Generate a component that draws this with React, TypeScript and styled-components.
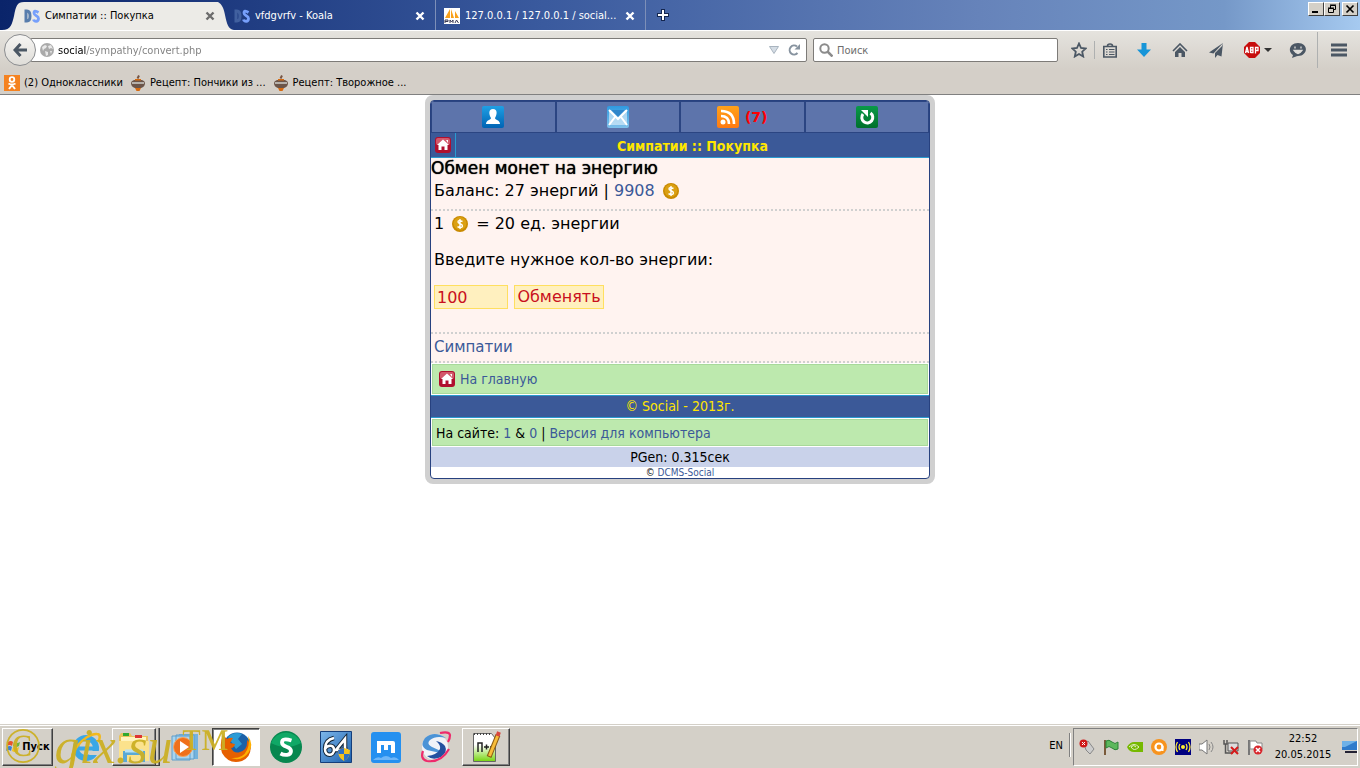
import React from "react";
import styled, { createGlobalStyle, css } from "styled-components";

const Global = createGlobalStyle`
  *, *::before, *::after { box-sizing: border-box; }
  body { margin: 0; background: #fff; color: #000; font: 11px/14px "DejaVu Sans Condensed", "DejaVu Sans", sans-serif; }
  button, input { font: inherit; color: inherit; margin: 0; }
  button { padding: 0; border: 0; background: none; }
  svg { display: block; flex: none; }
  a { color: #3b5998; text-decoration: none; }
`;

const Screen = styled.div`
  display: flex;
  flex-direction: column;
  min-height: 100vh;
`;

/* ---------- browser chrome ---------- */

const TabStrip = styled.header`
  display: flex;
  align-items: flex-end;
  height: 31px;
  border-bottom: 1px solid #fff;
  background: linear-gradient(90deg, #0a246a, #3a5a9e 40%, #6683ba 72%, #7598c8 90%, #a6caf0);
`;

const Tab = styled.div<{ $active?: boolean }>`
  display: flex;
  align-items: center;
  gap: 4px;
  width: ${(p) => (p.$active ? 194 : 202)}px;
  height: ${(p) => (p.$active ? 28 : 30)}px;
  margin-right: ${(p) => (p.$active ? 0 : 8)}px;
  padding: ${(p) => (p.$active ? "0" : "2px 7px 0 0")};
  color: ${(p) => (p.$active ? "#000" : "#fff")};
  background: ${(p) => (p.$active ? "#ecebe7" : "none")};
  border-right: ${(p) => (p.$active ? "0" : "1px solid #7d8fb8")};
`;

const TabLabel = styled.button`
  display: flex;
  align-items: center;
  gap: 5px;
  flex: 1;
  min-width: 0;
  text-align: left;
  white-space: nowrap;
`;

const IconButton = styled.button<{ $w?: number }>`
  display: flex;
  align-items: center;
  justify-content: center;
  width: ${(p) => p.$w ?? 16}px;
  height: 24px;
  flex: none;
`;

const NewTab = styled(IconButton)`
  align-self: center;
  margin-left: 1px;
`;

const WindowButtons = styled.div`
  display: flex;
  align-self: flex-start;
  margin: 2px 2px 0 auto;
`;

const WindowButton = styled.button<{ $apart?: boolean }>`
  display: flex;
  align-items: center;
  justify-content: center;
  width: 16px;
  height: 14px;
  margin-left: ${(p) => (p.$apart ? 2 : 0)}px;
  background: #d4d0c8;
  border: 1px solid;
  border-color: #fff #404040 #404040 #fff;
`;

const Toolbars = styled.div`
  height: 64px;
  border-bottom: 1px solid #808080;
  background: linear-gradient(#e5e3de, #d4cfc8 60%);
`;

const NavBar = styled.div`
  display: flex;
  align-items: center;
  height: 38px;
  padding: 0 12px 0 4px;
`;

const Back = styled.button`
  display: flex;
  align-items: center;
  justify-content: center;
  width: 32px;
  height: 32px;
  flex: none;
  border: 1px solid #8b8d90;
  border-radius: 50%;
  background: linear-gradient(#f6f5f3, #dfddd8);
  z-index: 1;
`;

const Field = styled.div<{ $width?: number }>`
  display: flex;
  align-items: center;
  gap: 4px;
  height: 24px;
  ${(p) => (p.$width ? css`width: ${p.$width}px; flex: none; margin: 0 12px 0 6px; padding: 0 5px;` : css`flex: 1; margin-left: -6px; padding: 0 4px 0 9px;`)}
  border: 1px solid #7d7b78;
  border-radius: 2px;
  background: #fff;
`;

const TextBox = styled.input`
  flex: 1;
  min-width: 0;
  padding: 1px 0 0;
  border: 0;
  outline: 0;
  background: none;
  color: #6d6d6d;
  &::placeholder { color: #6d6d6d; opacity: 1; }
`;

const Address = styled(TextBox)`
  color: transparent;
  background: linear-gradient(90deg, #000 28px, #7d7d7d 28px);
  background-clip: text;
  -webkit-background-clip: text;
`;

const Tools = styled.div`
  display: flex;
  align-items: center;
`;

const ToolDivider = styled.i<{ $tall?: boolean }>`
  width: 1px;
  height: ${(p) => (p.$tall ? 36 : 18)}px;
  margin: ${(p) => (p.$tall ? "0 12px 0 2px" : "0 0 0 6px")};
  background: #aeb0b0;
`;

const Bookmarks = styled.nav`
  display: flex;
  align-items: center;
  gap: 7px;
  height: 25px;
  padding: 2px 0 0 4px;
`;

const Bookmark = styled.a`
  display: flex;
  align-items: center;
  gap: 4px;
  color: #000;
  white-space: nowrap;
`;

/* ---------- site ---------- */

const Viewport = styled.main`
  flex: 1;
  font-family: "DejaVu Sans", sans-serif;
`;

const Card = styled.div`
  width: 100%;
  max-width: 510px;
  margin: 0 auto;
  border: 5px solid #d0d0d0;
  border-radius: 8px;
  background: #d0d0d0;
`;

const CardBody = styled.div`
  overflow: hidden;
  border: 1px solid #27417f;
  border-radius: 4px;
  background: #fff;
`;

const Menu = styled.nav`
  display: grid;
  grid-template-columns: repeat(4, 1fr);
  gap: 2px;
  padding: 1px;
  background: #2b4582;
`;

const MenuItem = styled.a`
  display: flex;
  align-items: center;
  justify-content: center;
  gap: 6px;
  height: 30px;
  background: #5d74ab;
  color: #f00;
  font-size: 14px;
  font-weight: 700;
`;

const TitleBar = styled.div`
  display: flex;
  height: 25px;
  border-bottom: 1px solid #2a9bd0;
  background: #3b5998;
`;

const HomeLink = styled.a`
  display: flex;
  align-items: center;
  width: 25px;
  padding-left: 4px;
  border-right: 1px solid #2a9bd0;
`;

const Title = styled.h1`
  flex: 1;
  margin: 0;
  color: #ffe600;
  font: 700 14px/26px "DejaVu Sans Condensed", "DejaVu Sans", sans-serif;
  text-align: center;
`;

const Content = styled.section`
  background: #fff3f0;
  font-size: 16px;
  line-height: 20px;
`;

const Subtitle = styled.h2`
  margin: 0;
  font-size: 17px;
  font-weight: 400;
  line-height: 20px;
  text-shadow: 0 0 1px #000;
`;

const Block = styled.div<{ $pad: string; $small?: boolean }>`
  padding: ${(p) => p.$pad};
  border-bottom: 2px dotted #d0d0d0;
  font-size: ${(p) => (p.$small ? 15 : 16)}px;
`;

const Line = styled.p`
  display: flex;
  align-items: center;
  gap: 8px;
  margin: 0;
  white-space: pre;
`;

const Exchange = styled.form`
  display: grid;
  grid-template-columns: 74px 90px;
  gap: 15px 6px;
  padding-top: 16px;
`;

const Prompt = styled.label`
  grid-column: 1 / -1;
  white-space: nowrap;
`;

const controlStyle = css`
  height: 24px;
  border: 1px solid #ffdf60;
  border-radius: 0;
  background: #fff0bf;
  color: #c91020;
  outline: 0;
`;

const Amount = styled.input`
  ${controlStyle}
  width: 100%;
  padding: 0 2px;
`;

const Submit = styled.button`
  ${controlStyle}
  white-space: nowrap;
`;

const GreenRow = styled.div<{ $large?: boolean }>`
  display: flex;
  align-items: center;
  gap: 5px;
  height: ${(p) => (p.$large ? 30 : 27)}px;
  margin: 1px;
  padding: 0 ${(p) => (p.$large ? 6 : 3)}px;
  border: 1px solid #a8d99a;
  background: #bde9ae;
  font: 14px/20px "DejaVu Sans Condensed", "DejaVu Sans", sans-serif;
`;

const Copyright = styled.div`
  border: solid #2a9bd0;
  border-width: 1px 0;
  background: #3b5998;
  color: #ffe600;
  font: 14px/21px "DejaVu Sans Condensed", "DejaVu Sans", sans-serif;
  text-align: center;
`;

const Timing = styled.div`
  background: #c9d2ea;
  font: 14px/20px "DejaVu Sans Condensed", "DejaVu Sans", sans-serif;
  text-align: center;
`;

const Engine = styled.div`
  font: 10px/11px "DejaVu Sans Condensed", "DejaVu Sans", sans-serif;
  text-align: center;
`;

/* ---------- taskbar ---------- */

const Taskbar = styled.footer`
  position: relative;
  display: flex;
  align-items: flex-start;
  gap: 2px;
  height: 44px;
  padding: 2px 2px 0;
  border-top: 1px solid #d4d0c8;
  box-shadow: inset 0 1px #fff;
  background: #d4d0c8;
  overflow: hidden;
`;

const raised = css`
  border: 1px solid;
  border-color: #fff #404040 #404040 #fff;
  box-shadow: inset -1px -1px #808080;
`;

const Start = styled.button`
  ${raised}
  display: flex;
  align-items: center;
  justify-content: center;
  gap: 1px;
  width: 51px;
  height: 38px;
  margin: 1px 7px 0 0;
  font-weight: 700;
`;

const Task = styled.button<{ $look?: "raised" | "pressed" }>`
  display: flex;
  align-items: center;
  justify-content: center;
  width: 48px;
  height: 38px;
  margin-top: 1px;
  ${(p) => p.$look === "raised" && raised}
  ${(p) =>
    p.$look === "pressed" &&
    css`
      background: #fff;
      border: 1px solid;
      border-color: #404040 #fff #fff #404040;
      box-shadow: inset 1px 1px #808080;
    `}
`;

const Stack = styled.div`
  display: flex;
  width: 48px;
  & > button { width: 44px; }
  &::after {
    content: "";
    width: 4px;
    height: 38px;
    margin-top: 1px;
    border: solid #404040;
    border-width: 0 1px 1px 0;
    box-shadow: inset -1px 0 #808080;
  }
`;

const Language = styled.button`
  align-self: center;
  margin-left: auto;
  padding: 0 4px 4px;
`;

const TrayDivider = styled.i`
  width: 2px;
  height: 24px;
  margin: 6px 0 0;
  border-left: 1px solid #808080;
  border-right: 1px solid #fff;
`;

const Tray = styled.div`
  display: flex;
  align-items: center;
  gap: 8px;
  height: 38px;
  margin-top: 1px;
  padding: 0 0 0 5px;
  border: 1px solid;
  border-color: #808080 #fff #fff #808080;
`;

const Clock = styled.time`
  display: flex;
  flex-direction: column;
  width: 60px;
  margin-left: 2px;
  line-height: 16px;
  text-align: center;
`;

const Watermark = styled.div`
  position: absolute;
  left: 4px;
  top: -5px;
  color: #ccb024;
  opacity: 0.95;
  font: 50px/52px "Liberation Serif", serif;
  white-space: pre;
  pointer-events: none;
  em { padding-right: 8px; }
`;

/* ---------- drawings ---------- */

const DS = ({ dim }: { dim?: boolean }) => (
  <svg width="16" height="16" viewBox="0 0 16 16">
    <path d="M2 3v10h1q3 0 3-5t-3-5z" fill="none" stroke={dim ? "#41609f" : "#587dac"} strokeWidth="3" />
    <path d="M14.500 4.500Q10 1.500 10 5c0 3 4.500 2.500 4.500 5.500 0 4-4.500 3-5 1" fill="none" stroke="#77a0fb" strokeWidth="2.800" />
  </svg>
);

const Cross = ({ c }: { c: string }) => (
  <svg width="10" height="10" viewBox="0 0 10 10">
    <path d="M1.500 1.500l7 7m0-7l-7 7" stroke={c} strokeWidth="2.400" />
  </svg>
);

const Sails = () => (
  <svg width="16" height="16" viewBox="0 0 16 16">
    <path fill="#fff" d="M0 0h16v16H0z" />
    <path fill="#f9a11b" d="M6 1v9H1zM7 1l3 9H7zM11 3l4 7h-4z" />
    <path d="M1 15v-3h3v1.500H1M6 15v-3l1.500 2L9 12v3M11 15l1.500-3 2 3" fill="none" stroke="#3a3a55" />
  </svg>
);

const Globe = () => (
  <svg width="14" height="14" viewBox="0 0 14 14">
    <circle cx="7" cy="7" r="7" fill="#aaa" />
    <path fill="#e9e9e9" d="M2 4l3-2 2 1-1 2-2 1-1 2zM8 3l3-1 2 4-2-1-2 1zM5 8l3 1 0 3-2 1zM10 8l2 0-1 3z" />
  </svg>
);

const Pot = () => (
  <svg width="16" height="16" viewBox="0 0 16 16">
    <path d="M7.500 3.500L9 .500" stroke="#754" strokeWidth="2" />
    <path fill="#d56a10" d="M4 11h8l-2.500 5h-3z" />
    <path fill="#6b554a" d="M1 8q0-2 3-3h8q3 1 3 3 0 4-4 5H5Q1 12 1 8z" />
    <path fill="#b5b0aa" d="M2 7h12v2H2z" />
    <path fill="#d56a10" d="M5 4h6v1.500H5z" />
  </svg>
);

const Odno = () => (
  <svg width="16" height="16" viewBox="0 0 16 16">
    <path fill="#f58220" d="M0 0h16v16H0z" />
    <circle cx="8" cy="4.500" r="2.300" fill="none" stroke="#fff" strokeWidth="1.800" />
    <path d="M4.500 8.500q3.500 2 7 0M8 10l-3 4m3-4l3 4" fill="none" stroke="#fff" strokeWidth="2" />
  </svg>
);

const House = () => (
  <svg width="16" height="16" viewBox="0 0 16 16">
    <rect width="16" height="16" rx="3" fill="#b00f2e" />
    <rect x="1" y="1" width="14" height="7" rx="2" fill="#d2586b" />
    <path fill="#fff" d="M8 2.500l6 5.500h-1.500v5H9.500V9.500h-3V13H3.500V8H2zM11 3h2v3z" />
  </svg>
);

const Coin = () => (
  <svg width="16" height="16" viewBox="0 0 16 16">
    <circle cx="8" cy="8" r="8" fill="#c98a00" />
    <circle cx="8" cy="7.500" r="6.500" fill="#dba012" />
    <path d="M10.500 5.500q-4.500-2-4.500.500c0 2 4.500 1.500 4.500 4 0 2-3 2-5 .700M8 3v10" fill="none" stroke="#fff" strokeWidth="1.400" />
  </svg>
);

const Tile = ({ c1, c2, id, children }: { c1: string; c2: string; id: string; children: React.ReactNode }) => (
  <svg width="22" height="22" viewBox="0 0 22 22">
    <linearGradient id={id} x2="0" y2="1">
      <stop stopColor={c1} />
      <stop offset="1" stopColor={c2} />
    </linearGradient>
    <rect width="22" height="22" rx="2" fill={`url(#${id})`} />
    {children}
  </svg>
);

const ie = (
  <svg width="34" height="34" viewBox="0 0 34 34">
    <circle cx="17" cy="18" r="10" fill="none" stroke="#3aa7e6" strokeWidth="6" />
    <path d="M10 18.500h20" stroke="#3aa7e6" strokeWidth="4" />
    <path fill="#d4d0c8" d="M21 21h13v4H20z" />
    <path d="M5 31C-3 27 15 3 28 4c4 0 3 5 1 8" fill="none" stroke="#f2b91d" strokeWidth="2.500" />
  </svg>
);

const folder = (
  <svg width="32" height="32" viewBox="0 0 32 32">
    <path fill="#e9c45c" d="M1 5l2-3h9l2 3h16v25H1z" />
    <path fill="#fff3bd" d="M3 6h25v5H3z" />
    <path fill="#2fa82f" d="M5 2h6v3H5z" />
    <path fill="#d33" d="M17 4h7v3h-7z" />
    <path fill="#fbe28c" d="M1 10h30v20H1z" />
    <path d="M7 31v-9h18v9" fill="none" stroke="#5aa9d6" strokeWidth="4" />
    <path d="M7 20h18" stroke="#b9e2f5" strokeWidth="3" />
  </svg>
);

const player = (
  <svg width="32" height="32" viewBox="0 0 32 32">
    <path fill="#74b3dd" d="M9 3h19v25H9z" />
    <path fill="#a9d4ee" stroke="#5f9ecb" d="M6 4h18v24H6zM2 5h18v24H2z" />
    <circle cx="13" cy="16" r="9.500" fill="#f0701a" stroke="#f7a35c" />
    <path fill="#fff" d="M10 10l9 6-9 6z" />
  </svg>
);

const firefox = (
  <svg width="32" height="32" viewBox="0 0 32 32">
    <circle cx="17" cy="15" r="13.500" fill="#1c62a8" />
    <path fill="#2c9bd6" d="M8 6q6-6 14-3l-4 5 4 5-6 5z" />
    <path fill="#e66000" d="M3 4l4 4q3-2 6-1l-3 5 5 1q-1 4-4 4 3 6 9 4 8-2 7-12l3 3q3 13-8 18-13 4-20-8Q-1 13 3 4z" />
    <path fill="#ffb000" d="M28 5q6 8 1 16-7 10-18 6 12 1 16-8 3-6 1-14z" />
  </svg>
);

const sGreen = (
  <svg width="32" height="32" viewBox="0 0 32 32">
    <circle cx="16" cy="16" r="16" fill="#07874f" />
    <path fill="#10a866" d="M1 12a16 16 0 0 1 30 0q-15 8-30 0z" />
    <path d="M21.500 9.500Q12 6.500 12 11.500c0 5.500 9 3 9 8.500 0 5-7 4.500-10.500 2.500" fill="none" stroke="#fff" strokeWidth="3.800" />
  </svg>
);

const aida = (
  <svg width="32" height="32" viewBox="0 0 32 32">
    <linearGradient id="aida" x2="1" y2="1">
      <stop stopColor="#7db7ea" />
      <stop offset="1" stopColor="#1b5fae" />
    </linearGradient>
    <path fill="url(#aida)" stroke="#153e7a" d="M.500 .500h31v31H.500z" />
    <g fill="none">
      <path d="M14 7Q5 9 5 18c0 8 9 7 9 1s-7-5-9-1M25 25V8l-9 11h12" stroke="#123" strokeWidth="4.500" />
      <path d="M14 7Q5 9 5 18c0 8 9 7 9 1s-7-5-9-1M25 25V8l-9 11h12" stroke="#fff" strokeWidth="2.600" />
    </g>
    <path fill="#f6c21c" d="M18 19l6-2 6 2q0 8-6 11-6-3-6-11z" />
    <path fill="#2f6fc4" d="M18 19l6-2v6h-5.500zM24 23h5.500q-1.500 5-5.500 7z" />
  </svg>
);

const maxthon = (
  <svg width="30" height="31" viewBox="0 0 30 31">
    <rect width="30" height="31" rx="3" fill="#2490f0" />
    <path fill="#fff" d="M6 9h16q2 0 2 2v10h-4v-8h-3v5h-4v-5h-3v8H6z" />
    <path fill="#6cb6f8" d="M2 28q4-4 8-2 5-4 10 0 5-2 8 2z" />
  </svg>
);

const swirl = (
  <svg width="32" height="32" viewBox="0 0 32 32">
    <circle cx="15" cy="16" r="13" fill="#f1f3f8" />
    <path fill="#4b93d6" d="M26 7Q14-1 5 7q-6 8 2 12 8 2 15 3-4-4-10-6-6-3-2-7 6-5 16-2z" />
    <path fill="#23509f" d="M7 25q6 5 14 1 7-5 4-11-3-4-9-5 5 4 4 8-3 6-13 7z" />
    <path d="M20 2q9-2 10 2 0 4-2 7M3 20q-3 8 4 10 14 2 22-12" fill="none" stroke="#ee2a6b" strokeWidth="2.200" />
  </svg>
);

const notepad = (
  <svg width="32" height="34" viewBox="0 0 32 34">
    <linearGradient id="npp" x2="0" y2="1">
      <stop offset=".4" stopColor="#fff" />
      <stop offset="1" stopColor="#76d40f" />
    </linearGradient>
    <path fill="url(#npp)" stroke="#666" d="M3.500 3.500h18l4 5v23h-22z" />
    <path d="M4 4h18" stroke="#444" strokeWidth="2" strokeDasharray="1 2" />
    <path d="M8 22v-9h4v9M14 17h5m-2.500-2.500v5M20 17h4" fill="none" stroke="#222" strokeWidth="1.500" />
    <path d="M19 27L28 5" stroke="#8b5a12" strokeWidth="5" />
    <path d="M19.500 26L28 5" stroke="#f8bd3a" strokeWidth="3" />
    <path d="M27.500 6L29 2" stroke="#d9473d" strokeWidth="4" />
  </svg>
);

const tray: [string, React.ReactNode][] = [
  ["Устройство", <><path d="M5 5l4-3 6 8-4 5-4-4z" fill="#ccc" stroke="#888" /><circle cx="4.500" cy="4.500" r="4" fill="#d01818" /><path d="M3 3l3 3m0-3L3 6" stroke="#fff" /></>],
  ["Флаг", <><path d="M2 1v15" stroke="#7a5a3a" strokeWidth="2" /><path d="M3 2q3-2 6 1t6 0v7q-3 2-6-1t-6 0z" fill="#5cb85c" stroke="#2a8336" /></>],
  ["NVIDIA", <><path d="M0 8q3-5 7-5h9v10H7Q2 13 0 8z" fill="#76b900" /><path d="M2 8q5-5 10 0-5 5-8 0 3-3 5 0" fill="none" stroke="#e2efc6" /></>],
  ["Аваст", <><circle cx="8" cy="8" r="8" fill="#f7931e" /><circle cx="8" cy="8" r="3.500" fill="none" stroke="#fff" strokeWidth="2.200" /><path d="M11.500 7v5" stroke="#fff" strokeWidth="2" /></>],
  ["Сеть", <><path d="M0 0h16v16H0z" fill="#000080" /><path d="M5 5q-2 3 0 6M2.500 3q-3 5 0 10M11 5q2 3 0 6M13.500 3q3 5 0 10" fill="none" stroke="#ffee30" strokeWidth="1.300" /><circle cx="8" cy="8" r="2" fill="#ffee30" /></>],
  ["Громкость", <><path d="M0 5h3l5-4v14l-5-4H0z" fill="#fff" stroke="#777" /><path d="M10 5q2 3 0 6M12 3q4 5 0 10" fill="none" stroke="#888" /></>],
  ["Подключение", <><path d="M5 4h10v8H5z" fill="#ddd" stroke="#555" /><path d="M1 1v4h3V1M2.500 5v9H10" fill="none" stroke="#555" strokeWidth="1.500" /><path d="M8 8l7 7m0-7l-7 7" stroke="#d51b1b" strokeWidth="2" /></>],
  ["Центр поддержки", <><path d="M2 1v15" stroke="#777" strokeWidth="2" /><path d="M3 2h6l1 2h5v6H3z" fill="#fff" stroke="#888" /><circle cx="11" cy="11" r="4.500" fill="#d8262c" /><path d="M9 9l4 4m0-4l-4 4" stroke="#fff" strokeWidth="1.500" /></>],
];

const ink = "#4b5764";

export default function App() {
  return (
    <Screen>
      <Global />
      <TabStrip>
        <svg width="24" height="28" viewBox="0 0 24 28">
          <path fill="#ecebe7" d="M2 28c9 0 10-6 12-14C16 4 17 0 24 0v28z" />
        </svg>
        <Tab $active>
          <TabLabel><DS />Симпатии :: Покупка</TabLabel>
          <IconButton aria-label="Закрыть"><Cross c="#6c6c6c" /></IconButton>
        </Tab>
        <svg width="16" height="28" viewBox="0 0 16 28">
          <path fill="#ecebe7" d="M0 0c4 2 6 7 7 13 2 9 3 14 9 15H0z" />
        </svg>
        <Tab>
          <TabLabel><DS dim />vfdgvrfv - Koala</TabLabel>
          <IconButton aria-label="Закрыть"><Cross c="#fff" /></IconButton>
        </Tab>
        <Tab>
          <TabLabel><Sails />127.0.0.1 / 127.0.0.1 / social...</TabLabel>
          <IconButton aria-label="Закрыть"><Cross c="#fff" /></IconButton>
        </Tab>
        <NewTab aria-label="Новая вкладка">
          <svg width="14" height="14" viewBox="0 0 14 14">
            <path d="M7 1v12M1 7h12" stroke="#14264f" strokeWidth="4" />
            <path d="M7 2v10M2 7h10" stroke="#fff" strokeWidth="2" />
          </svg>
        </NewTab>
        <WindowButtons>
          <WindowButton aria-label="Свернуть"><svg width="10" height="10"><path d="M1 8h6" stroke="#000" strokeWidth="2" /></svg></WindowButton>
          <WindowButton aria-label="Восстановить"><svg width="10" height="10"><path d="M3.500 4V1.500h5v4H7M1.500 4.500h5v4h-5zM3 1h6M1 4h6" fill="none" stroke="#000" /></svg></WindowButton>
          <WindowButton aria-label="Закрыть" $apart><svg width="10" height="10"><path d="M1.500 1.500l7 7m0-7l-7 7" stroke="#000" strokeWidth="1.700" /></svg></WindowButton>
        </WindowButtons>
      </TabStrip>

      <Toolbars>
        <NavBar>
          <Back aria-label="Назад">
            <svg width="14" height="14" viewBox="0 0 14 14"><path d="M7.500 1L2 7l5.500 6M2 7h12" fill="none" stroke={ink} strokeWidth="3" /></svg>
          </Back>
          <Field>
            <Globe />
            <Address aria-label="Адрес" defaultValue="social/sympathy/convert.php" />
            <IconButton aria-label="Список"><svg width="10" height="8"><path d="M.500 .500h9L5 7.500z" fill="#d5dde5" stroke="#a9b4bf" /></svg></IconButton>
            <IconButton aria-label="Обновить"><svg width="12" height="12" viewBox="0 0 12 12"><path d="M9.500 9A4.500 4.500 0 1 1 9 2.500" fill="none" stroke="#87939f" strokeWidth="2" /><path d="M12 0v5.500H6.500z" fill="#87939f" /></svg></IconButton>
          </Field>
          <Field $width={245}>
            <svg width="14" height="14" viewBox="0 0 14 14"><circle cx="5.500" cy="5.500" r="4.200" fill="none" stroke="#8b8b8b" strokeWidth="2" /><path d="M8.500 8.500l5 5" stroke="#8b8b8b" strokeWidth="2.500" /></svg>
            <TextBox aria-label="Поиск" placeholder="Поиск" />
          </Field>
          <Tools>
            <IconButton aria-label="В закладки" $w={18}><svg width="16" height="16" viewBox="0 0 16 16"><path d="M8 1.500l2 4.500 4.700.500-3.500 3.200 1 4.800L8 12l-4.200 2.500 1-4.800L1.300 6.500 6 6z" fill="none" stroke={ink} strokeWidth="1.800" /></svg></IconButton>
            <ToolDivider />
            <IconButton aria-label="Закладки" $w={30}><svg width="14" height="15" viewBox="0 0 14 15"><path d="M.800 3.500h12.400v10.500H.800zM4.500 3q0-2 2.500-2t2.500 2" fill="none" stroke={ink} strokeWidth="1.600" /><path d="M3 6.500h1.500M6 6.500h5.500M3 9h1.500M6 9h5.500M3 11.500h1.500M6 11.500h5.500" stroke={ink} /></svg></IconButton>
            <IconButton aria-label="Загрузки" $w={38}><svg width="14" height="14" viewBox="0 0 14 14"><path d="M4.500 0h5v6.500H14L7 14 0 6.500h4.500z" fill="#1795d8" /></svg></IconButton>
            <IconButton aria-label="Домой" $w={34}><svg width="16" height="14" viewBox="0 0 16 14"><path d="M1 8l7-7 7 7" fill="none" stroke={ink} strokeWidth="1.600" /><path d="M3 9l5-5 5 5v5H9.500v-4h-3v4H3z" fill={ink} /></svg></IconButton>
            <IconButton aria-label="Отправить" $w={38}><svg width="14" height="15" viewBox="0 0 14 15"><path d="M14 0L0 9.500l4.500 1zM13 3L6 10v5l2.500-3 4 1.500L14 0z" fill={ink} /></svg></IconButton>
            <IconButton aria-label="Adblock Plus" $w={46}>
              <svg width="28" height="16" viewBox="0 0 28 16"><path d="M5 0h6l5 5v6l-5 5H5l-5-5V5z" fill="#c70d0d" /><path d="M1.500 11l1.500-6 1.500 6M2 9.500h2M6.500 11V5.500h2.500v5H6.500M6.500 8h2.500M11.500 11.500V5.500H14v3h-2" fill="none" stroke="#fff" strokeWidth="1.300" /><path d="M20 6h8l-4 4z" fill="#333" /></svg>
            </IconButton>
            <IconButton aria-label="Чат" $w={34}><svg width="18" height="16" viewBox="0 0 18 16"><path d="M9 1c11 0 10 13 0 13-2 0-3 1-6 2l1-3C-2 9 1 1 9 1z" fill={ink} /><path d="M5 8.500q4 6 8 0zM6 4.500v2M12 4.500v2" fill="#e0deda" stroke="#e0deda" strokeWidth="1.300" /></svg></IconButton>
            <ToolDivider $tall />
            <IconButton aria-label="Меню" $w={18}><svg width="16" height="14" viewBox="0 0 16 14"><path d="M0 2h16M0 7h16M0 12h16" stroke={ink} strokeWidth="3" /></svg></IconButton>
          </Tools>
        </NavBar>
        <Bookmarks aria-label="Закладки">
          <Bookmark href="#ok"><Odno />(2) Одноклассники</Bookmark>
          <Bookmark href="#r1"><Pot />Рецепт: Пончики из ...</Bookmark>
          <Bookmark href="#r2"><Pot />Рецепт: Творожное ...</Bookmark>
        </Bookmarks>
      </Toolbars>

      <Viewport>
        <Card>
          <CardBody>
            <Menu>
              <MenuItem href="#me" aria-label="Моя страница">
                <Tile id="t1" c1="#1fa0e4" c2="#0063b4"><path fill="#fff" d="M11 3c5 0 4 6 2 9 0 2 5 2 5 6H4c0-4 5-4 5-6-2-3-3-9 2-9z" /></Tile>
              </MenuItem>
              <MenuItem href="#mail" aria-label="Почта">
                <Tile id="t2" c1="#2f9ae0" c2="#7fc0ea"><path fill="#e8f4fc" d="M2 4h18v15H2z" opacity=".6" /><path d="M2 4l9 9 9-9M2 19l6-8m12 8l-6-8" fill="none" stroke="#fff" strokeWidth="2" /><path fill="#2f86cb" d="M4 4h14l-7 7z" /></Tile>
              </MenuItem>
              <MenuItem href="#feed">
                <Tile id="t3" c1="#ffa21a" c2="#ff7a12"><circle cx="6" cy="16" r="2.500" fill="#fff" /><path d="M4 10q8 0 8 8M4 5q13 0 13 13" fill="none" stroke="#fff" strokeWidth="2.600" /></Tile>
                (7)
              </MenuItem>
              <MenuItem href="#reload" aria-label="Обновить">
                <Tile id="t4" c1="#0a9a48" c2="#00702c"><path d="M14.500 7A5.500 5.500 0 1 1 7 8" fill="none" stroke="#fff" strokeWidth="3" /><path fill="#fff" d="M5 4h7v7z" /></Tile>
              </MenuItem>
            </Menu>
            <TitleBar>
              <HomeLink href="#home" aria-label="На главную"><House /></HomeLink>
              <Title>Симпатии :: Покупка</Title>
            </TitleBar>
            <Content>
              <Subtitle>Обмен монет на энергию</Subtitle>
              <Block $pad="3px 3px 8px">
                <Line><span>Баланс: 27 энергий | <a href="#coins">9908</a></span><Coin /></Line>
              </Block>
              <Block $pad="3px 3px 23px">
                <Line><span>1</span><Coin /><span>= 20 ед. энергии</span></Line>
                <Exchange onSubmit={(e) => e.preventDefault()}>
                  <Prompt htmlFor="amount">Введите нужное кол-во энергии:</Prompt>
                  <Amount id="amount" defaultValue="100" />
                  <Submit>Обменять</Submit>
                </Exchange>
              </Block>
              <Block $pad="3px 3px 4px" $small><a href="#sympathy">Симпатии</a></Block>
            </Content>
            <GreenRow $large><House /><a href="#home">На главную</a></GreenRow>
            <Copyright>© Social - 2013г.</Copyright>
            <GreenRow>
              <span>На сайте: <a href="#on">1</a> &amp; <a href="#guests">0</a> | <a href="#full">Версия для компьютера</a></span>
            </GreenRow>
            <Timing>PGen: 0.315сек</Timing>
            <Engine>© <a href="#dcms">DCMS-Social</a></Engine>
          </CardBody>
        </Card>
      </Viewport>

      <Taskbar>
        <Start>
          <svg width="16" height="14" viewBox="0 0 16 14"><path fill="#e8532a" d="M3 2q3-2 5 0L7 6Q5 4 2 6z" /><path fill="#6db33f" d="M9 2q3 2 6 0l-1 4q-3 2-6 0z" /><path fill="#3a7fd6" d="M2 7q3-2 5 0l-1 4q-2-2-5 0z" /><path fill="#f6c21c" d="M8 7q3 2 6 0l-1 4q-3 2-6 0z" /></svg>
          Пуск
        </Start>
        <Task aria-label="Internet Explorer">{ie}</Task>
        <Stack><Task aria-label="Проводник" $look="raised">{folder}</Task></Stack>
        <Task aria-label="Проигрыватель">{player}</Task>
        <Task aria-label="Firefox" $look="pressed">{firefox}</Task>
        <Task aria-label="S">{sGreen}</Task>
        <Task aria-label="AIDA64">{aida}</Task>
        <Task aria-label="Maxthon">{maxthon}</Task>
        <Task aria-label="SRWare">{swirl}</Task>
        <Task aria-label="Notepad++" $look="raised">{notepad}</Task>
        <Language>EN</Language>
        <TrayDivider />
        <Tray>
          {tray.map(([name, art]) => (
            <IconButton key={name} aria-label={name}><svg width="16" height="16" viewBox="0 0 16 16">{art}</svg></IconButton>
          ))}
          <Clock><span>22:52</span><span>20.05.2015</span></Clock>
          <IconButton aria-label="Рабочий стол"><svg width="16" height="14" viewBox="0 0 16 14"><path d="M1 1h15v9H1z" fill="#2f7bcb" /><path d="M1 1h15L4 7H1z" fill="#6eb1e8" /><path d="M4 13h12v-2H4z" fill="#223" /></svg></IconButton>
        </Tray>
        <Watermark>© <em>gix.su</em>™</Watermark>
      </Taskbar>
    </Screen>
  );
}
